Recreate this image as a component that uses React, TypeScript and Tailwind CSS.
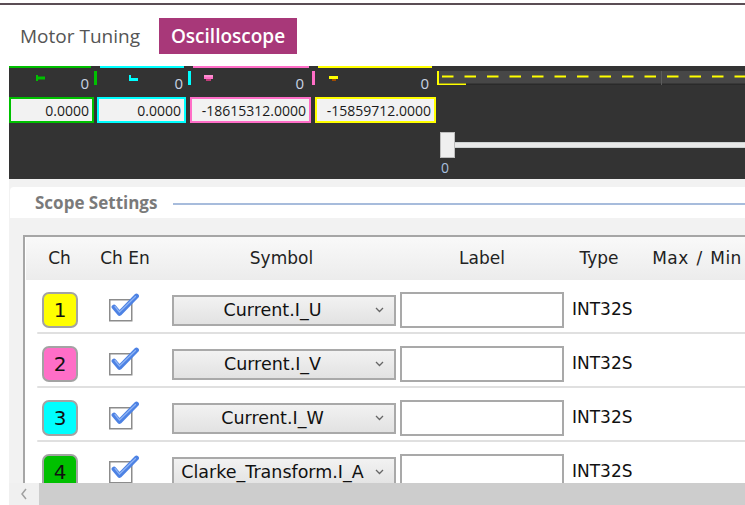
import React from 'react';

const legend = [
  { col: 'w-[88px]', line: 'ml-0 w-[82px] bg-[#00c000]', icon: 'ml-[26px]', zero: 'mr-[5px]', bar: 'bg-[#00c000]', kind: 'g' },
  { col: 'w-[94px]', line: 'ml-[3px] w-[84px] bg-[#00ffff]', icon: 'ml-[32px]', zero: 'mr-[5px]', bar: 'bg-[#00ffff]', kind: 'c' },
  { col: 'w-[124px]', line: 'ml-[2px] w-[116px] bg-[#ff6ec7]', icon: 'ml-[13px]', zero: 'mr-[8px]', bar: 'bg-[#ff6ec7]', kind: 'p' },
  { col: 'w-[122px]', line: 'ml-[3px] w-[114px] bg-[#ffff00]', icon: 'ml-[14px]', zero: 'mr-[8px]', bar: '', kind: 'y' },
];

const boxes = [
  { cls: 'w-[85px] border-[#00c000]', value: '0.0000' },
  { cls: 'ml-[3px] w-[89px] border-[#00ffff]', value: '0.0000' },
  { cls: 'ml-[4px] w-[121px] border-[#ff6ec7]', value: '-18615312.0000' },
  { cls: 'ml-[4px] w-[121px] border-[#ffff00]', value: '-15859712.0000' },
];

const channels = [
  { n: 1, bg: 'bg-[#ffff00]', symbol: 'Current.I_U' },
  { n: 2, bg: 'bg-[#ff6ec7]', symbol: 'Current.I_V' },
  { n: 3, bg: 'bg-[#00ffff]', symbol: 'Current.I_W' },
  { n: 4, bg: 'bg-[#00c000]', symbol: 'Clarke_Transform.I_A' },
];

function LegendIcon({ kind }: { kind: string }) {
  if (kind === 'g')
    return (
      <svg width="10" height="6">
        <rect x="1" y="0" width="2" height="6" fill="#00c000" />
        <rect x="1" y="1.5" width="9" height="3" fill="#00c000" />
      </svg>
    );
  if (kind === 'c')
    return (
      <svg width="10" height="6">
        <rect x="0" y="0" width="2" height="3" fill="#00ffff" />
        <rect x="0" y="3" width="9" height="3" fill="#00ffff" />
      </svg>
    );
  if (kind === 'p')
    return (
      <svg width="10" height="6">
        <rect x="0" y="0" width="9" height="2" fill="#ff8fd0" />
        <rect x="0" y="2" width="9" height="2" fill="#ff6ec7" />
        <rect x="2" y="4" width="5" height="2" fill="#c03c78" />
      </svg>
    );
  return (
    <svg width="10" height="6">
      <rect x="0" y="1" width="9" height="3" fill="#ffff00" />
      <rect x="3" y="4" width="4" height="2" fill="#a04a00" />
    </svg>
  );
}

function Check() {
  return (
    <svg width="32" height="30" viewBox="0 0 32 30">
      <rect x="2.75" y="6.75" width="22" height="21" fill="#fff" stroke="#8c8c8c" strokeWidth="1.5" />
      <path d="M7 14 L12.5 20.5 L29.5 3" stroke="#4d82e4" strokeWidth="4.8" fill="none" strokeLinejoin="round" strokeLinecap="round" />
      <path d="M8 13.5 L12.5 19 L28.5 3.5" stroke="#8fb4f4" strokeWidth="1.2" fill="none" strokeLinecap="round" />
    </svg>
  );
}

export default function App() {
  return (
    <div className="w-[745px] h-[505px] bg-white overflow-hidden flex flex-col" style={{ fontFamily: '"Open Sans", "Noto Sans", sans-serif' }}>
      <div className="h-[3px] shrink-0" />
      <div className="h-[2px] shrink-0 bg-[#5b4e55]" />

      {/* tabs */}
      <div className="h-[61px] shrink-0 flex items-start pt-[13px]">
        <div className="w-[159px] h-[36px] flex items-center pl-[20px] text-[19px] text-[#555555]">Motor Tuning</div>
        <div className="w-[138px] h-[36px] flex items-center justify-center bg-[#a83879] text-white text-[19px] font-semibold">Oscilloscope</div>
      </div>

      {/* scope view */}
      <div className="ml-[9px] h-[113px] shrink-0 bg-[#333333] flex flex-col">
        <div className="h-[31px] flex">
          {legend.map((l, i) => (
            <div key={i} className={`${l.col} flex flex-col`}>
              <div className={`${l.line} h-[2px]`} />
              <div className="flex items-start">
                <div className={`${l.icon} mt-[7px] flex`}><LegendIcon kind={l.kind} /></div>
                <div className="flex-1" />
                <div className={`${l.zero} mt-[8px] text-[15px] leading-none text-[#c9d2e2]`}>0</div>
                {l.bar && <div className={`${l.bar} w-[3px] h-[14px] mt-[3px]`} />}
              </div>
            </div>
          ))}
          <div className="flex-1 mt-[5px] h-[14px] flex">
            <svg width="308" height="14">
              <rect x="0" y="0" width="308" height="14" fill="#474747" />
              <rect x="0" y="12.5" width="308" height="1.5" fill="#2a2a2a" />
              <rect x="224" y="0" width="1" height="14" fill="#5c5c5c" />
              <line x1="5" y1="5.5" x2="308" y2="5.5" stroke="#ffff00" strokeWidth="2" strokeDasharray="11.5 11" />
              <rect x="0" y="0" width="2" height="14" fill="#ffff00" />
              <rect x="0" y="12.5" width="29" height="1.5" fill="#ffff00" />
            </svg>
          </div>
        </div>

        <div className="h-[26px] flex">
          {boxes.map((b, i) => (
            <div key={i} className={`${b.cls} h-[26px] border-2 bg-[#f2f2f2] flex items-center justify-end pr-[3px] text-[14px] text-[#1a1a1a]`}>
              {b.value}
            </div>
          ))}
        </div>

        <div className="flex-1 flex flex-col pl-[431px] pt-[9px]">
          <div className="flex items-center">
            <div className="w-[15px] h-[26px] bg-[#efefef] border border-[#bdbdbd]" />
            <div className="flex-1 h-[6px] bg-[#e8e8e8] border-y border-[#cdd1d1]" />
          </div>
          <div className="mt-[3px] pl-[1px] text-[14px] leading-none text-[#a9c0df]">0</div>
        </div>
      </div>

      {/* settings */}
      <div className="ml-[9px] flex-1 bg-[#f2f2f2] flex flex-col min-h-0">
        <div className="h-[8px] shrink-0" />
        <div className="ml-[1px] h-[31px] shrink-0 bg-white rounded-tl-[4px] flex items-center">
          <span className="pl-[25px] text-[17px] font-bold text-[#7a7a7a]">Scope Settings</span>
          <div className="ml-[16px] mt-[3px] flex-1 h-[2px] bg-[#a7bcdc]" />
        </div>
        <div className="h-[17px] shrink-0" />

        <div className="ml-[14px] flex-1 min-h-0 overflow-hidden border-l-2 border-t-2 border-[#a6a6a6] bg-white pl-[1px] flex flex-col" style={{ fontFamily: '"DejaVu Sans", Verdana, sans-serif' }}>
          <div className="h-[43px] shrink-0 flex items-center bg-gradient-to-b from-[#f9f9f9] to-[#ececec] text-[17px] text-[#222222]">
            <div className="w-[67px] shrink-0 text-center">Ch</div>
            <div className="w-[64px] shrink-0 text-center">Ch En</div>
            <div className="w-[241px] shrink-0 text-center pl-[8px]">Symbol</div>
            <div className="w-[168px] shrink-0 text-center">Label</div>
            <div className="w-[66px] shrink-0 text-center">Type</div>
            <div className="w-[130px] shrink-0 text-center whitespace-nowrap tracking-[0.4px] [word-spacing:2px]">Max / Min</div>
          </div>

          {channels.map((c) => (
            <div key={c.n} className="shrink-0">
              <div className="h-[52px] pt-[8px] flex items-center text-[#111111]">
                <div className="w-[67px] shrink-0 flex justify-center pl-[1px]">
                  <div className={`${c.bg} w-[36px] h-[36px] rounded-[7px] border-2 border-[#a3a3a3] flex items-center justify-center text-[20px]`}>{c.n}</div>
                </div>
                <div className="w-[64px] shrink-0 flex pl-[14px] mb-[4px]">
                  <Check />
                </div>
                <div className="w-[241px] shrink-0 pl-[15px] pr-[2px]">
                  <div className="h-[31px] border-2 border-[#a9a9a9] bg-gradient-to-b from-[#f2f2f2] to-[#e2e2e2] flex items-center">
                    <div className="flex-1 min-w-0 pl-[7px] overflow-hidden whitespace-nowrap text-center text-[17.5px]">{c.symbol}</div>
                    <div className="w-[30px] shrink-0 flex justify-center">
                      <svg width="9" height="6" viewBox="0 0 9 6">
                        <path d="M1 1 L4.5 4.5 L8 1" stroke="#666" strokeWidth="1.3" fill="none" />
                      </svg>
                    </div>
                  </div>
                </div>
                <div className="w-[168px] shrink-0 px-[2px]">
                  <div className="h-[36px] border-2 border-[#a9a9a9] bg-white" />
                </div>
                <div className="w-[66px] shrink-0 pl-[6px] overflow-hidden whitespace-nowrap text-[17px]">INT32S</div>
              </div>
              <div className="ml-[11px] h-[2px] bg-[#e0e0e0] rounded-l-[2px]" />
            </div>
          ))}
        </div>

        <div className="h-[22px] shrink-0 flex bg-[#cdcdcd]">
          <div className="w-[30px] bg-[#f0f0f0] flex items-center justify-center">
            <svg width="8" height="12" viewBox="0 0 8 12">
              <path d="M6 1 L2 6 L6 11" stroke="#a0a0a0" strokeWidth="1.5" fill="none" />
            </svg>
          </div>
        </div>
      </div>
    </div>
  );
}
